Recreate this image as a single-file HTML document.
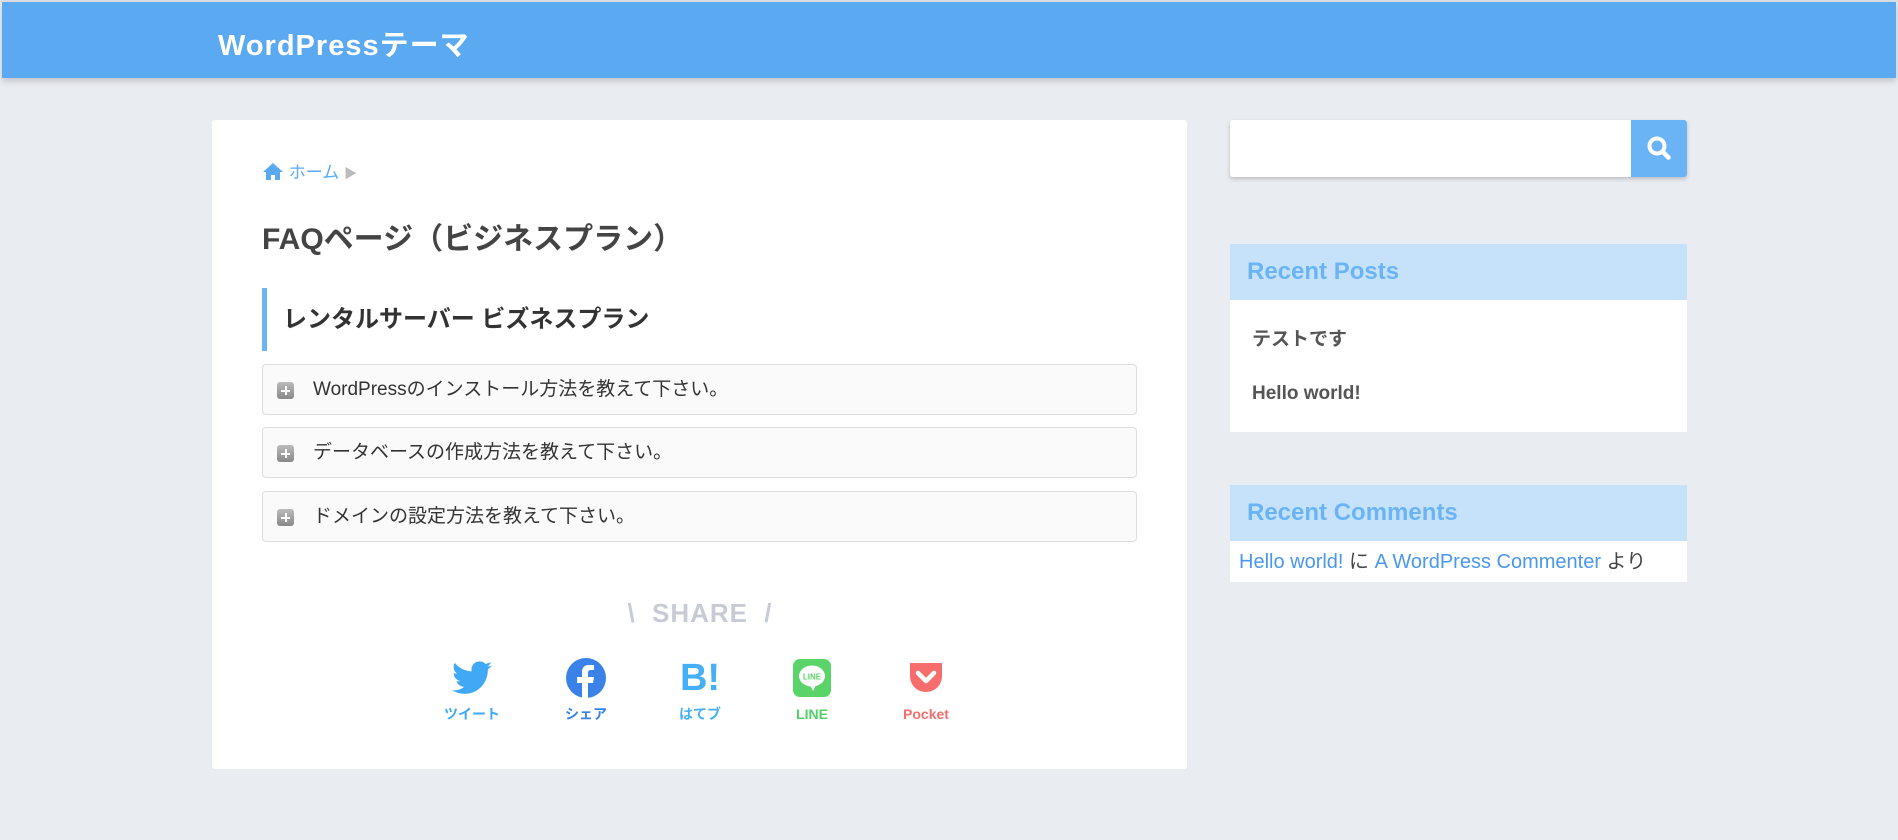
<!DOCTYPE html>
<html><head><meta charset="utf-8"><style>
*{box-sizing:border-box;margin:0;padding:0}
body{width:1898px;height:840px;background:#e9ecf1;font-family:"Liberation Sans","Noto Sans CJK JP",sans-serif;position:relative;overflow:hidden}
.topline{position:absolute;left:0;right:0;top:0;height:2px;background:#dde0e4}
.hdr{position:absolute;left:2px;right:2px;top:2px;height:76px;background:#5aa9f1;box-shadow:0 3px 6px rgba(0,0,0,.18)}
.hdr span{position:absolute;left:216px;top:20px;color:#fff;font-size:29px;font-weight:bold;letter-spacing:1px}
.card{position:absolute;left:212px;top:120px;width:975px;height:649px;background:#fff;border-radius:3px}
.bc{position:absolute;left:262px;top:158px;color:#5aa9f1;font-size:17px}
h1{position:absolute;left:262px;top:214px;font-size:30px;color:#444;font-weight:bold}
.h2{position:absolute;left:262px;top:288px;width:875px;height:63px;border-left:5px solid #6ab4f6;padding-left:16px;line-height:63px;font-size:24px;font-weight:bold;color:#333}
.faq{position:absolute;left:262px;width:875px;height:51px;border:1px solid #ddd;border-radius:4px;background:#fafafa;font-size:19px;color:#333;line-height:49px;padding-left:50px}
.faq i{position:absolute;left:14px;top:17px;width:17px;height:17px;border-radius:3px;background:linear-gradient(#bbb,#888)}
.faq i:before,.faq i:after{content:"";position:absolute;background:#fff;left:4px;top:7.5px;width:9px;height:2px}
.faq i:after{left:7.5px;top:4px;width:2px;height:9px}
.share{position:absolute;left:580px;top:598px;width:240px;text-align:center;font-size:26px;font-weight:bold;color:#c8cbd6;letter-spacing:1px;word-spacing:8px}
.sb{position:absolute;top:656px;width:80px;text-align:center;font-size:14px;font-weight:bold;line-height:18px}
.sb .ic{height:44px;display:flex;align-items:center;justify-content:center;margin-bottom:5px}
.side{position:absolute;left:1230px;width:457px}
.srch{top:120px;height:57px;background:#fff;border-radius:3px;box-shadow:0 2px 4px rgba(0,0,0,.2)}
.srch b{position:absolute;right:0;top:0;width:56px;height:57px;background:#6ab4f6;border-radius:0 3px 3px 0}
.wh{height:56px;background:#c6e2fb;color:#6ab4f6;font-size:24px;font-weight:bold;line-height:56px;padding-left:17px}
.wb{background:#fff}
</style></head><body>
<div class="topline"></div>
<div class="hdr"><span>WordPressテーマ</span></div>
<div class="card"></div>
<div class="bc"><svg width="22" height="18" viewBox="0 0 22 18" style="vertical-align:-2px"><path d="M11 1L1 10h3v8h5v-5h4v5h5v-8h3z" fill="#5aa9f1"/></svg> ホーム <span style="color:#bbb;font-size:13px">▶</span></div>
<h1>FAQページ（ビジネスプラン）</h1>
<div class="h2">レンタルサーバー ビズネスプラン</div>
<div class="faq" style="top:364px"><i></i>WordPressのインストール方法を教えて下さい。</div>
<div class="faq" style="top:427px"><i></i>データベースの作成方法を教えて下さい。</div>
<div class="faq" style="top:491px"><i></i>ドメインの設定方法を教えて下さい。</div>
<div class="share">\ SHARE /</div>
<div class="sb" style="left:432px;color:#3fa9f5"><div class="ic"><svg width="40" height="36" viewBox="0 0 24 20"><path d="M24 2.4a10 10 0 0 1-2.8.8A5 5 0 0 0 23.3.4a10 10 0 0 1-3.1 1.2A4.9 4.9 0 0 0 11.8 6 14 14 0 0 1 1.7.9a4.9 4.9 0 0 0 1.5 6.6 4.9 4.9 0 0 1-2.2-.6 4.9 4.9 0 0 0 3.9 4.9 5 5 0 0 1-2.2.1 4.9 4.9 0 0 0 4.6 3.4A10 10 0 0 1 0 17.3 14 14 0 0 0 7.5 19.5c9 0 14-7.5 14-14v-.6A10 10 0 0 0 24 2.4z" fill="#3fa9f5"/></svg></div>ツイート</div>
<div class="sb" style="left:546px;color:#3b82e8"><div class="ic"><svg width="40" height="40" viewBox="0 0 40 40"><circle cx="20" cy="20" r="20" fill="#3b82e8"/><path d="M22 40V25h5l1-6h-6v-4c0-2 1-3 3-3h3V7h-5c-5 0-7 3-7 7v5h-5v6h5v15z" fill="#fff"/></svg></div>シェア</div>
<div class="sb" style="left:660px;color:#45b0f6"><div class="ic" style="font-size:38px;font-weight:900;color:#45b0f6">B!</div>はてブ</div>
<div class="sb" style="left:772px;color:#4fd067"><div class="ic"><svg width="38" height="38" viewBox="0 0 38 38"><rect width="38" height="38" rx="7" fill="#5ad468"/><ellipse cx="19" cy="17" rx="13" ry="10.5" fill="#fff"/><path d="M17 26l3 6 3-6z" fill="#fff"/><text x="19" y="20.5" font-size="8" font-weight="bold" fill="#5ad468" text-anchor="middle" font-family="Liberation Sans">LINE</text></svg></div>LINE</div>
<div class="sb" style="left:886px;color:#f76d6d"><div class="ic"><svg width="36" height="36" viewBox="0 0 36 36"><path d="M2 3h32v13c0 9-7 16-16 16S2 25 2 16z" fill="#f76d6d"/><path d="M10 13l8 8 8-8" stroke="#fff" stroke-width="4.5" fill="none" stroke-linecap="round" stroke-linejoin="round"/></svg></div>Pocket</div>
<div class="side srch" style="position:absolute"><b><svg width="56" height="57" viewBox="0 0 56 57"><circle cx="26" cy="26" r="7.5" stroke="#fff" stroke-width="4" fill="none"/><path d="M31.5 31.5l6 6" stroke="#fff" stroke-width="4.5" stroke-linecap="round"/></svg></b></div>
<div class="side" style="top:244px"><div class="wh">Recent Posts</div></div>
<div class="side wb" style="top:300px;height:132px;color:#555;font-size:19px;font-weight:bold"><div style="position:absolute;left:22px;top:24px">テストです</div><div style="position:absolute;left:22px;top:83px">Hello world!</div></div>
<div class="side" style="top:485px"><div class="wh">Recent Comments</div><div class="wb" style="height:41px;font-size:20px;line-height:42px;padding-left:9px;color:#444;white-space:nowrap"><span style="color:#4a97ef">Hello world!</span> に <span style="color:#4a97ef">A WordPress Commenter</span> より</div></div>
</body></html>
